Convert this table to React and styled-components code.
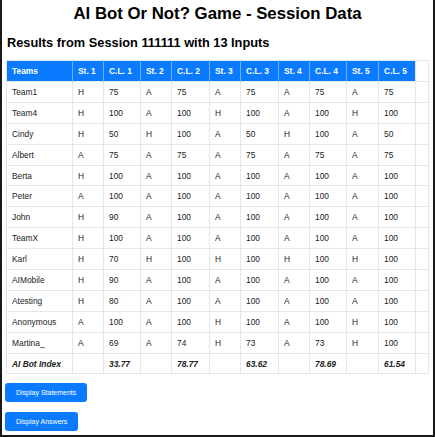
import React from "react";
import styled, { createGlobalStyle } from "styled-components";

const Global = createGlobalStyle`
  html, body { margin: 0; padding: 0; background: #fff; }
  body { font-family: "Liberation Sans", Arial, sans-serif; }
  * { box-sizing: border-box; }
`;

const Frame = styled.div`
  width: 435px;
  height: 437px;
  border: 2px solid #1a1a1a;
  border-top: none;
  padding: 0 4px;
  display: flex;
  flex-direction: column;
  background: #fff;
  color: #000;
`;

const Title = styled.h1`
  margin: 4px 0 0;
  font-size: 16.8px;
  line-height: 19px;
  font-weight: bold;
  text-align: center;
`;

const Subtitle = styled.h2`
  margin: 12px 0 0;
  font-size: 12.8px;
  line-height: 16px;
  font-weight: bold;
  padding-left: 1px;
`;

const TableBox = styled.div`
  margin-top: 9px;
  width: 422px;
`;

const Table = styled.table`
  border-collapse: collapse;
  table-layout: fixed;
  width: 422px;
  font-size: 8.4px;
  color: #222;
  border: 1px solid #e3e6ea;
`;

const Th = styled.th`
  background: ${(p) => (p.$blank ? "#fff" : "#0a7bff")};
  color: #fff;
  font-weight: bold;
  text-align: left;
  padding: 0 0 0 5px;
  height: 21px;
  border-left: 1px solid ${(p) => (p.$blank ? "#e3e6ea" : "#6fb0ff")};
  &:first-child { border-left: none; }
`;

const Td = styled.td`
  padding: 0 0 0 5px;
  height: 20.9px;
  border: 1px solid #e3e6ea;
  font-weight: ${(p) => (p.$bold ? "bold" : "normal")};
  font-style: ${(p) => (p.$bold ? "italic" : "normal")};
  white-space: nowrap;
`;

const Buttons = styled.div`
  display: flex;
  flex-direction: column;
  align-items: flex-start;
  gap: 10px;
  margin-top: 9px;
  margin-left: -1px;
`;

const Button = styled.button`
  background: #0a7bff;
  color: #fff;
  border: none;
  border-radius: 3px;
  height: 19px;
  padding: 0 11px;
  font-family: "Liberation Sans", Arial, sans-serif;
  font-size: 7px;
  cursor: pointer;
`;

const widths = [66, 31, 37, 31, 38, 31, 38, 31, 37, 32, 37, 13];
const headers = ["Teams", "St. 1", "C.L. 1", "St. 2", "C.L. 2", "St. 3", "C.L. 3", "St. 4", "C.L. 4", "St. 5", "C.L. 5"];

const rows = [
  ["Team1", "H", "75", "A", "75", "A", "75", "A", "75", "A", "75"],
  ["Team4", "H", "100", "A", "100", "H", "100", "A", "100", "H", "100"],
  ["Cindy", "H", "50", "H", "100", "A", "50", "H", "100", "A", "50"],
  ["Albert", "A", "75", "A", "75", "A", "75", "A", "75", "A", "75"],
  ["Berta", "H", "100", "A", "100", "A", "100", "A", "100", "A", "100"],
  ["Peter", "A", "100", "A", "100", "A", "100", "A", "100", "A", "100"],
  ["John", "H", "90", "A", "100", "A", "100", "A", "100", "A", "100"],
  ["TeamX", "H", "100", "A", "100", "A", "100", "A", "100", "A", "100"],
  ["Karl", "H", "70", "H", "100", "H", "100", "H", "100", "H", "100"],
  ["AIMobile", "H", "90", "A", "100", "A", "100", "A", "100", "A", "100"],
  ["Atesting", "H", "80", "A", "100", "A", "100", "A", "100", "A", "100"],
  ["Anonymous", "A", "100", "A", "100", "H", "100", "A", "100", "H", "100"],
  ["Martina_", "A", "69", "A", "74", "H", "73", "A", "73", "H", "100"],
];

const index = ["AI Bot Index", "", "33.77", "", "78.77", "", "63.62", "", "78.69", "", "61.54"];

export default function App() {
  return (
    <>
      <Global />
      <Frame>
        <Title>AI Bot Or Not? Game - Session Data</Title>
        <Subtitle>Results from Session 111111 with 13 Inputs</Subtitle>
        <TableBox>
          <Table>
            <colgroup>
              {widths.map((w, i) => (
                <col key={i} style={{ width: w }} />
              ))}
            </colgroup>
            <thead>
              <tr>
                {headers.map((h) => (
                  <Th key={h}>{h}</Th>
                ))}
                <Th $blank />
              </tr>
            </thead>
            <tbody>
              {rows.map((r) => (
                <tr key={r[0]}>
                  {r.map((c, i) => (
                    <Td key={i}>{c}</Td>
                  ))}
                  <Td />
                </tr>
              ))}
              <tr>
                {index.map((c, i) => (
                  <Td key={i} $bold>{c}</Td>
                ))}
                <Td />
              </tr>
            </tbody>
          </Table>
        </TableBox>
        <Buttons>
          <Button>Display Statements</Button>
          <Button>Display Answers</Button>
        </Buttons>
      </Frame>
    </>
  );
}
